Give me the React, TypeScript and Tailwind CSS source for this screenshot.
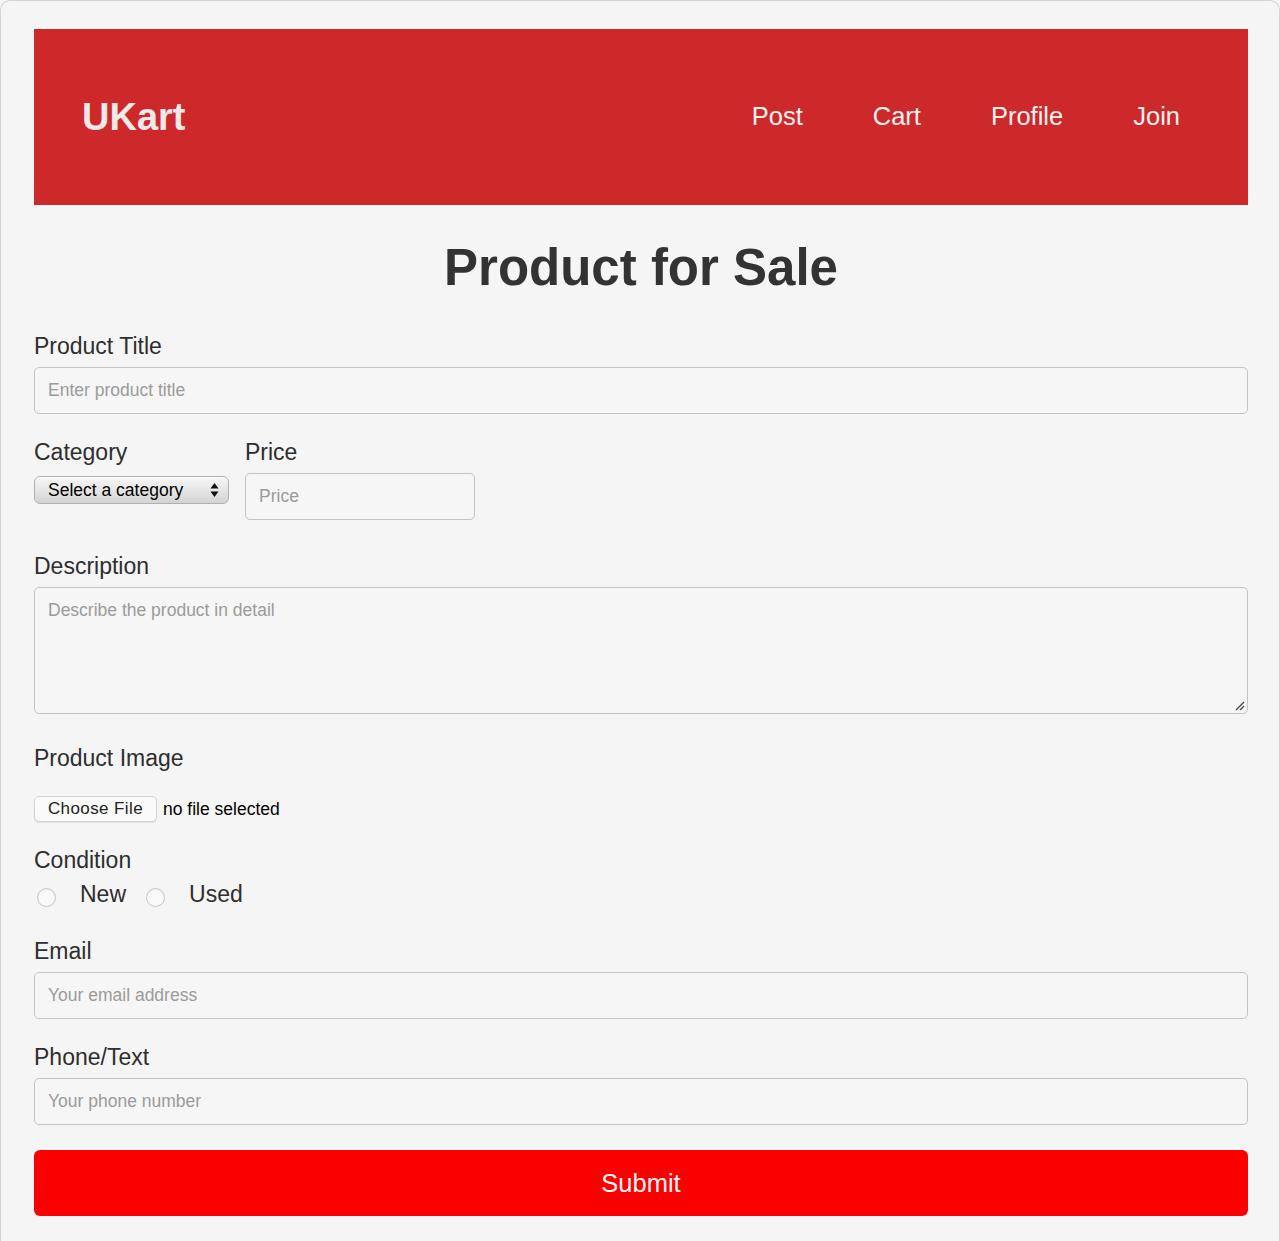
import React from "react";

const font = { fontFamily: '"Liberation Sans", Arial, Helvetica, sans-serif' };

function Label({ children, className = "" }: { children: React.ReactNode; className?: string }) {
  return (
    <div className={"text-[23px] leading-[26px] text-[#2e2e2e] " + className}>{children}</div>
  );
}

function TextInput({ placeholder, className = "" }: { placeholder: string; className?: string }) {
  return (
    <input
      type="text"
      placeholder={placeholder}
      className={
        "block h-[47px] rounded-[5px] border border-[#c4c4c4] bg-[#f6f6f6] pl-[13px] text-[17.5px] text-[#333] outline-none placeholder:text-[#9b9b9b] " +
        className
      }
    />
  );
}

export default function App() {
  return (
    <div className="h-[1241px] overflow-hidden bg-[#f5f5f5]" style={font}>
      <div className="min-h-[1300px] rounded-t-[10px] border border-b-0 border-[#d4d4d4] pl-[33px] pr-[31px] pt-[28px]">
        {/* Header */}
        <header className="flex h-[176px] items-center justify-between bg-[#cd292a] pl-[48px] pr-[68px]">
          <div className="text-[38px] font-bold leading-none text-[#f1e8e8]">UKart</div>
          <nav className="flex gap-[70px] text-[25.5px] leading-none text-[#fbf1f1]">
            <a>Post</a>
            <a>Cart</a>
            <a>Profile</a>
            <a>Join</a>
          </nav>
        </header>

        <h1 className="mt-[37px] h-[51px] text-center text-[51px] font-bold leading-[51px] text-[#333333]">
          Product for Sale
        </h1>

        {/* Product title */}
        <Label className="mt-[40px]">Product Title</Label>
        <TextInput placeholder="Enter product title" className="mt-[8px] w-full" />

        {/* Category / Price */}
        <div className="mt-[25px] flex gap-[16px]">
          <div className="flex flex-col">
            <Label>Category</Label>
            <div className="mt-[11px] flex h-[28px] w-[195px] items-center justify-between rounded-[6px] border border-[#b0b0b0] bg-gradient-to-b from-[#f7f7f7] via-[#e6e6e6] to-[#d3d3d3] pl-[13px] pr-[9px] text-[17.5px] text-black shadow-[inset_0_1px_0_#ffffff]">
              <span>Select a category</span>
              <svg width="9" height="16" viewBox="0 0 9 16">
                <path d="M4.5 1 L8.5 6.5 H0.5 Z" fill="#111" />
                <path d="M4.5 15 L8.5 9.5 H0.5 Z" fill="#111" />
              </svg>
            </div>
          </div>
          <div className="flex flex-col">
            <Label>Price</Label>
            <TextInput placeholder="Price" className="mt-[8px] w-[230px]" />
          </div>
        </div>

        {/* Description */}
        <Label className="mt-[33px]">Description</Label>
        <div className="relative mt-[8px]">
          <textarea
            placeholder="Describe the product in detail"
            className="block h-[127px] w-full resize-none rounded-[5px] border border-[#c4c4c4] bg-[#f6f6f6] px-[13px] pt-[12px] text-[17.5px] leading-[20px] text-[#333] outline-none placeholder:text-[#9b9b9b]"
          />
          <svg className="absolute bottom-[3px] right-[3px]" width="11" height="11" viewBox="0 0 11 11">
            <path d="M10 2 L2 10" stroke="#444" strokeWidth="1.3" />
            <path d="M10 6 L6 10" stroke="#444" strokeWidth="1.3" />
          </svg>
        </div>

        {/* Product image */}
        <Label className="mt-[31px]">Product Image</Label>
        <div className="mt-[25px] flex h-[26px] items-center">
          <div className="flex h-[26px] w-[123px] items-center justify-center rounded-[5px] border border-[#d2d2d2] bg-[#fafafa] text-[17px] tracking-[0.4px] text-[#222] shadow-[0_1px_1px_rgba(0,0,0,0.08)]">
            Choose File
          </div>
          <span className="ml-[6px] text-[17.5px] text-black">no file selected</span>
        </div>

        {/* Condition */}
        <Label className="mt-[25px]">Condition</Label>
        <div className="mt-[8px] flex h-[26px] items-start text-[23px] leading-[26px] text-[#2e2e2e]">
          <span className="ml-[3px] mt-[7px] block h-[19px] w-[19px] rounded-full border border-[#c6c6c6] bg-[#f9f9f9] shadow-[inset_0_1px_1px_rgba(0,0,0,0.06)]" />
          <span className="ml-[24px]">New</span>
          <span className="ml-[20px] mt-[7px] block h-[19px] w-[19px] rounded-full border border-[#c6c6c6] bg-[#f9f9f9] shadow-[inset_0_1px_1px_rgba(0,0,0,0.06)]" />
          <span className="ml-[24px]">Used</span>
        </div>

        {/* Email */}
        <Label className="mt-[31px]">Email</Label>
        <TextInput placeholder="Your email address" className="mt-[8px] w-full" />

        {/* Phone */}
        <Label className="mt-[25px]">Phone/Text</Label>
        <TextInput placeholder="Your phone number" className="mt-[8px] w-full" />

        <button className="mt-[25px] flex h-[66px] w-full items-center justify-center rounded-[6px] bg-[#fb0000] text-[25.5px] text-[#fff5f5]">
          Submit
        </button>
      </div>
    </div>
  );
}
